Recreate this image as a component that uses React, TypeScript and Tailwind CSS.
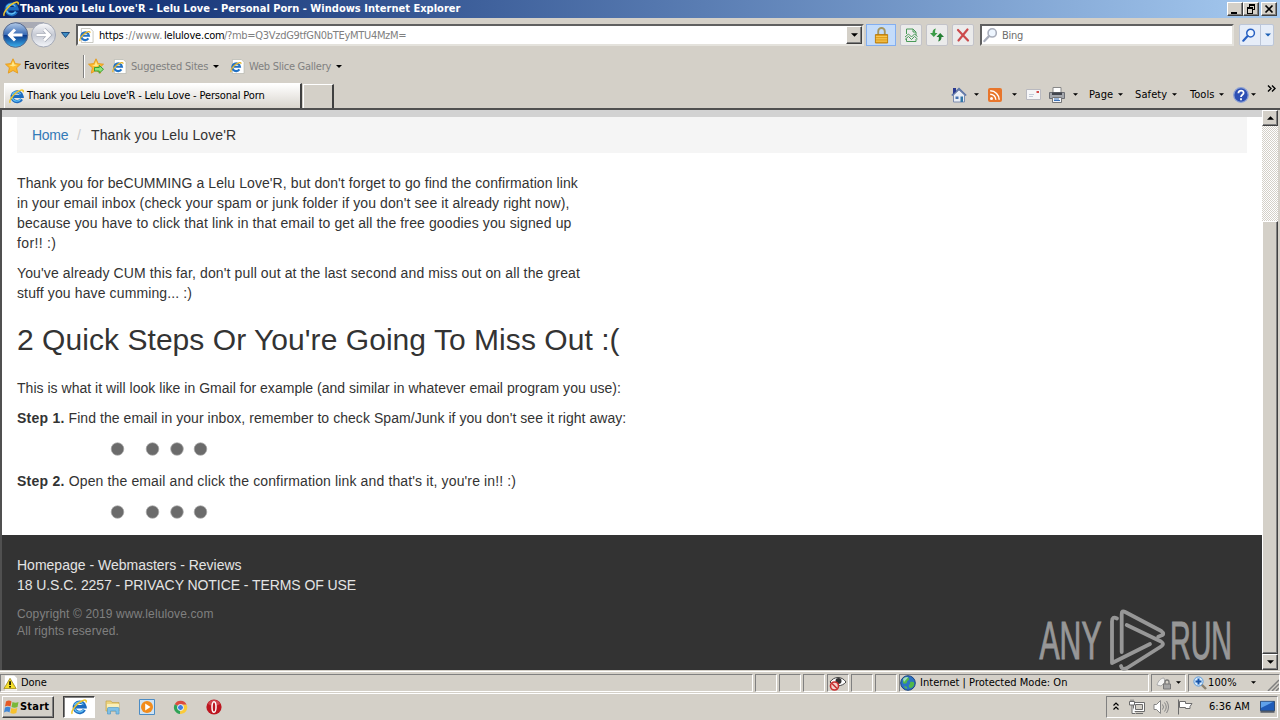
import React from 'react';

interface IconProps {
    className?: string;
}

const IeIcon: React.FC<IconProps> = ({ className }) => (
    <svg viewBox="0 0 16 16" className={className}>
        <path d="M13.4 10.8a5.4 5.2 0 1 1 .6-3H5" fill="none" stroke="#1d6cc0" strokeWidth="3.4" />
        <path d="M12.6 10.6a5 5 0 0 1-9-1M3.400 6.500a5 5 0 0 1 9-1" fill="none" stroke="#62c0f4" strokeWidth="1.300" />
        <path d="M1.200 14.800C-.6 11.800 7 2.600 13 1.200c2-.4 2.600.6 2 2.200" fill="none" stroke="#f0c62c" strokeWidth="1.500" />
    </svg>
);

const PageIcon: React.FC<IconProps> = ({ className }) => (
    <svg viewBox="0 0 16 16" className={className}>
        <path d="M2.500.5h9.500l3 3v12H2.500z" fill="#fff" stroke="#b8b8b0" strokeWidth=".8" />
        <path d="M10 11a4.100 4.100 0 1 1 .6-2.700H4.200" fill="none" stroke="#2272c4" strokeWidth="2.300" />
        <path d="M1 14C0 11.500 5 5 10 3.800c1.500-.3 1.900.4 1.500 1.400" fill="none" stroke="#e4b429" strokeWidth="1.300" />
    </svg>
);

const Caret: React.FC<IconProps> = ({ className = 'w-[6px] h-[3px] text-black' }) => (
    <svg viewBox="0 0 6 3" className={`shrink-0 ${className}`}>
        <path d="M0 0h6L3 3z" fill="currentColor" />
    </svg>
);

const Star: React.FC<{ arrow?: boolean }> = ({ arrow }) => (
    <svg viewBox="0 0 16 16" className="w-4 h-4 shrink-0">
        <path d="M8 .8l2.2 4.8 5.3.6-3.9 3.6 1.1 5.3L8 12.5l-4.7 2.6 1.1-5.3L.5 6.2l5.3-.6z" fill="#fdb92e" stroke="#e39a1c" strokeWidth=".9" />
        <path d="M8 3l1.3 3.4 3 .5-4.3 1.600-4-1.300 2.700-.5z" fill="#ffe98a" />
        {arrow && <path d="M6.500 9.500h4.700V7.400l4.300 3.900-4.300 3.900v-2.200H6.500z" fill="#8fe47a" stroke="#2c9a2e" strokeWidth=".9" />}
    </svg>
);

const Magnifier: React.FC<{ color: string; className: string }> = ({ color, className }) => (
    <svg viewBox="0 0 16 16" className={className}>
        <circle cx="9.800" cy="5.800" r="4.400" fill="#eef6ff" stroke={color} strokeWidth="1.700" />
        <path d="M6.400 9.200L1.500 14.500" stroke={color} strokeWidth="2.400" strokeLinecap="round" />
    </svg>
);

const raised = 'bg-[#d4d0c8] border border-t-white border-l-white border-r-[#404040] border-b-[#404040] shadow-[inset_-1px_-1px_0_#808080]';
const toolButton = 'h-[22px] flex items-center justify-center bg-[#ebebeb] border border-[#c3c3c9] rounded-[2px] shrink-0';

const TitleBar = () => (
    <div className="h-[18px] shrink-0 flex items-center pl-[3px] pr-[3px] bg-linear-to-r from-[#0a246a] to-[#a6caf0]">
        <IeIcon className="w-4 h-4 shrink-0" />
        <span className="ml-[1px] w-[460px] text-white font-bold text-[11px] leading-[18px] tracking-[0.02px] whitespace-nowrap">
            Thank you Lelu Love'R - Lelu Love - Personal Porn - Windows Internet Explorer
        </span>
        <div className="ml-auto flex">
            <div className={`w-4 h-[14px] ${raised}`}>
                <svg viewBox="0 0 14 12" className="w-[14px] h-3"><path d="M3 9h6v2H3z" /></svg>
            </div>
            <div className={`w-4 h-[14px] ${raised}`}>
                <svg viewBox="0 0 14 12" className="w-[14px] h-3" shapeRendering="crispEdges">
                    <path d="M5 1h6v2H5zM10 3h1v4H9V6h1zM5 3h1v1H5zM3 4h6v2H3zM3 6h1v4H3zM8 6h1v4H8zM3 10h6v1H3z" />
                </svg>
            </div>
            <div className={`ml-[2px] w-4 h-[14px] ${raised}`}>
                <svg viewBox="0 0 14 12" className="w-[14px] h-3"><path d="M3.500 2.500l7 7M10.500 2.500l-7 7" stroke="#000" strokeWidth="1.700" /></svg>
            </div>
        </div>
    </div>
);

const AddressRow = () => (
    <div className="h-[34px] shrink-0 flex items-center pl-[2px]">
        <svg viewBox="0 0 56 28" className="w-14 h-7 shrink-0">
            <defs>
                <linearGradient id="back" x1="0" y1="0" x2="0" y2="1">
                    <stop offset="0" stopColor="#b4cbe8" />
                    <stop offset=".48" stopColor="#3a6cb6" />
                    <stop offset=".52" stopColor="#0c3b8c" />
                    <stop offset="1" stopColor="#3cb2ee" />
                </linearGradient>
                <linearGradient id="forward" x1="0" y1="0" x2="0" y2="1">
                    <stop offset="0" stopColor="#fbfbfd" />
                    <stop offset=".5" stopColor="#c6cad4" />
                    <stop offset="1" stopColor="#f4f6fa" />
                </linearGradient>
            </defs>
            <path d="M13 1h29v6H13z" fill="#a9abb5" />
            <circle cx="13.500" cy="14" r="12.300" fill="url(#back)" stroke="#56688c" />
            <circle cx="41.500" cy="14" r="12" fill="url(#forward)" stroke="#a4a9b6" />
            <path d="M20.500 14H8M13 8.500L7.500 14l5.500 5.500" fill="none" stroke="#fff" strokeWidth="3" />
            <path d="M34.500 14H47M42 8.500l5.500 5.500-5.500 5.500" fill="none" stroke="#a3a8b4" strokeWidth="4" />
            <path d="M34.500 14H47M42 8.500l5.500 5.500-5.500 5.500" fill="none" stroke="#fff" strokeWidth="2.700" />
        </svg>
        <svg viewBox="0 0 9 6" className="ml-[3px] w-[9px] h-[6px] shrink-0">
            <path d="M.5.5h8L4.500 5.500z" fill="#3d8cc4" stroke="#1c4a7c" />
        </svg>
        <div className="ml-[6px] w-[788px] h-[22px] shrink-0 bg-white border-2 border-t-[#606060] border-l-[#606060] border-r-[#e4e2dc] border-b-[#e4e2dc] flex items-center">
            <PageIcon className="ml-[1px] w-[15px] h-[15px] shrink-0" />
            <span className="ml-[5px] pt-[2px] text-[11px] text-[#808080] whitespace-nowrap leading-[18px]">
                <span className="inline-block w-[26px] text-black tracking-[-0.2px]">https</span>
                <span className="inline-block w-[39px] tracking-[0.15px]">://www.</span>
                <span className="inline-block w-[60px] text-black tracking-[-0.2px]">lelulove.com</span>
                <span className="tracking-[-0.3px]">/?mb=Q3VzdG9tfGN0bTEyMTU4MzM=</span>
            </span>
            <div className={`ml-auto w-4 h-[18px] flex items-center justify-center ${raised}`}>
                <Caret className="w-[7px] h-[4px] text-black" />
            </div>
        </div>
        <div className="ml-[2px] w-[30px] h-[22px] shrink-0 flex items-center justify-center bg-[#c4dcfa] border border-[#82aef0]">
            <svg viewBox="0 0 16 18" className="w-[15px] h-[17px]">
                <path d="M4.500 9V4.500a3.500 3.500 0 0 1 7 0V9" fill="none" stroke="#a59660" strokeWidth="2" />
                <path d="M1.500 8h13v9h-13z" fill="#e3a01c" stroke="#b87c10" />
                <path d="M2 10h12M2 12.500h12M2 15h12" stroke="#f6cc60" />
            </svg>
        </div>
        <div className={`ml-1 w-[22px] ${toolButton}`}>
            <svg viewBox="0 0 16 16" className="w-4 h-4" fill="none" stroke="#4a9a58">
                <path d="M3.500 7V2h6.500l3 3v3M10 2v3h3M3.500 12v2.500h9.500V12" />
                <path d="M2 10l3.500-3 3 3 3-3 3 2.500M2 12.500l3.500-3 3 3 3-3 3 2.500" />
            </svg>
        </div>
        <div className={`ml-1 w-[22px] ${toolButton}`}>
            <svg viewBox="0 0 16 16" className="w-4 h-4">
                <path d="M7 1.500C4.500 2 3.500 3.500 3.500 6H1l3.800 4 3.700-4H6.200C6 4 6.200 2.700 7 1.500z" fill="#3c9c48" />
                <path d="M9 14.500c2.500-.5 3.500-2 3.500-4.500H15l-3.800-4-3.700 4h2.300c.2 2 0 3.300-.8 4.500z" fill="#257f34" />
            </svg>
        </div>
        <div className={`ml-1 w-[22px] ${toolButton}`}>
            <svg viewBox="0 0 16 16" className="w-4 h-4">
                <path d="M3 3l10 10.500M12.500 2.500L3.500 13.500" stroke="#cc4a4c" strokeWidth="2.200" strokeLinecap="round" />
            </svg>
        </div>
        <div className="ml-[6px] w-[254px] h-[22px] shrink-0 bg-white border-2 border-t-[#606060] border-l-[#606060] border-r-[#e4e2dc] border-b-[#e4e2dc] flex items-center">
            <Magnifier color="#a9aebb" className="ml-[1px] w-[15px] h-4" />
            <span className="ml-1 pt-[2px] text-[11px] text-[#6d6d6d] tracking-[-0.3px]">Bing</span>
        </div>
        <div className="ml-[5px] w-[35px] h-[22px] shrink-0 flex items-center bg-[#e6edf8] border border-[#bcc6d8] rounded-[2px]">
            <Magnifier color="#2861c2" className="ml-[2px] w-[14px] h-[14px]" />
            <div className="ml-1 w-px h-5 bg-[#bcc6d8]" />
            <Caret className="ml-[4px] w-[6px] h-[4px] text-[#1c60b4]" />
        </div>
    </div>
);

const FavoritesRow = () => (
    <div className="h-[28px] shrink-0 flex items-center pl-[5px] text-[11px] whitespace-nowrap">
        <Star />
        <span className="ml-[3px] pt-px w-[59px] tracking-[0.08px]">Favorites</span>
        <div className="w-[2px] h-[23px] bg-[#808080] border-r border-white" />
        <div className="ml-[3px]"><Star arrow /></div>
        <PageIcon className="ml-[8px] w-[15px] h-[15px] shrink-0" />
        <span className="ml-[4px] pt-[2px] w-[82px] text-[#808080] tracking-[-0.18px]">Suggested Sites</span>
        <Caret />
        <PageIcon className="ml-[11px] w-[15px] h-[15px] shrink-0" />
        <span className="ml-[4px] pt-[2px] w-[87px] text-[#808080] tracking-[-0.25px]">Web Slice Gallery</span>
        <Caret />
    </div>
);

const CommandBar = () => (
    <div className="ml-auto h-[27px] flex items-center text-[11px] whitespace-nowrap">
        <svg viewBox="0 0 16 16" className="w-4 h-4 shrink-0">
            <path d="M2.500 8v7h11V8L8 3z" fill="#e9eef6" stroke="#7d8cae" />
            <path d="M.8 8.500L8 1.500l7.200 7" fill="none" stroke="#5a74a8" strokeWidth="1.600" />
            <path d="M2 1h3v3.500L2 7z" fill="#2b3a90" />
            <path d="M4.500 9.500h3v2.500h-3z" fill="#4673b0" />
            <path d="M9.500 9.500H12V15H9.500z" fill="#3277a8" />
        </svg>
        <Caret className="ml-[7px] w-[5px] h-[3px]" />
        <svg viewBox="0 0 14 14" className="ml-[9px] w-[14px] h-[14px] shrink-0">
            <rect width="14" height="14" rx="2" fill="#e8762c" />
            <circle cx="3.500" cy="10.500" r="1.500" fill="#fff" />
            <path d="M2.200 6.200a5.600 5.600 0 0 1 5.600 5.600M2.200 2.800a9 9 0 0 1 9 9" fill="none" stroke="#fff" strokeWidth="1.500" />
        </svg>
        <Caret className="ml-[10px] w-[5px] h-[3px]" />
        <svg viewBox="0 0 15 11" className="ml-[9px] w-[15px] h-[11px] shrink-0">
            <path d="M.5.5h14v10H.5z" fill="#f6f6f8" stroke="#b9b9bf" />
            <path d="M10.500 2h2.500v2h-2.500z" fill="#d34a48" />
            <path d="M3 5.500h5M3 7.500h4" stroke="#c3cad7" />
        </svg>
        <svg viewBox="0 0 16 16" className="ml-[8px] w-4 h-4 shrink-0">
            <path d="M4 .5h8V6H4z" fill="#fff" stroke="#888" />
            <path d="M.5 5.500h15v6H.5z" fill="#a4a7ad" stroke="#6c6e74" />
            <path d="M3 5.500h10V8H3z" fill="#43464e" />
            <path d="M3.500 10.500h9v5h-9z" fill="#f2f5fa" stroke="#777" />
            <path d="M5 12h5M5 13.500h6" stroke="#3e73b8" />
        </svg>
        <Caret className="ml-[8px] w-[5px] h-[3px]" />
        <span className="ml-[11px] pt-px w-[29px] tracking-[0.05px]">Page</span>
        <Caret className="w-[5px] h-[3px]" />
        <span className="ml-[12px] pt-px w-[37px] tracking-[0.1px]">Safety</span>
        <Caret className="w-[5px] h-[3px]" />
        <span className="ml-[13px] pt-px w-[29px] tracking-[0.05px]">Tools</span>
        <Caret className="w-[5px] h-[3px]" />
        <svg viewBox="0 0 16 16" className="ml-[9px] w-4 h-4 shrink-0">
            <circle cx="8" cy="8" r="7.300" fill="#2d50b4" stroke="#8ea2d4" strokeWidth="1.300" />
            <path d="M5.400 6.200c0-3.600 5.400-3.400 5.200-.2C10.500 7.800 8 7.800 8 10M8 11.300v1.900" fill="none" stroke="#fff" strokeWidth="1.800" />
        </svg>
        <Caret className="ml-[2px] w-[5px] h-[3px]" />
        <svg viewBox="0 0 9 7" className="ml-[11px] mb-[13px] w-[9px] h-[7px] shrink-0">
            <path d="M1 .5l3 3-3 3M5 .5l3 3-3 3" fill="none" stroke="#000" strokeWidth="1.400" />
        </svg>
    </div>
);

const TabRow = () => (
    <div className="h-[28px] shrink-0 flex items-end pl-1 pr-1">
        <div className="w-[298px] h-[25px] shrink-0 flex items-center pl-[4px] border-t border-l border-white border-r-2 border-r-[#404040] bg-linear-to-b from-white to-[#d9d5ce] text-[11px] whitespace-nowrap">
            <IeIcon className="w-[15px] h-[15px] shrink-0" />
            <span className="ml-[3px] pt-px tracking-[-0.15px]">Thank you Lelu Love'R - Lelu Love - Personal Porn</span>
        </div>
        <div className="ml-[1px] w-[31px] h-[24px] shrink-0 border-t border-l border-white border-r-2 border-r-[#404040]" />
        <CommandBar />
    </div>
);

const Dots = () => (
    <svg viewBox="0 0 110 20" className="ml-[93px] w-[110px] h-5" fill="#6b6b6b" stroke="#a9a9a9" strokeWidth=".7">
        <circle cx="7.500" cy="10" r="6.300" />
        <circle cx="42.500" cy="10" r="6.300" />
        <circle cx="67" cy="10" r="6.300" />
        <circle cx="90.500" cy="10" r="6.300" />
    </svg>
);

const AnyRunLogo = () => (
    <svg viewBox="0 0 210 62" className="absolute left-[1034px] top-[499px] w-[210px] h-[62px] overflow-visible" fill="#979797">
        <g fontSize="54" stroke="#979797" strokeWidth="1.100" fontFamily="'Liberation Sans Narrow', 'Liberation Sans', sans-serif">
            <text x="3.500" y="50" textLength="62" lengthAdjust="spacingAndGlyphs">ANY</text>
            <text x="134" y="50" textLength="62" lengthAdjust="spacingAndGlyphs">RUN</text>
        </g>
        <g transform="translate(-2 0)" fill="none" stroke="#979797" strokeWidth="3.800" strokeLinejoin="round" strokeLinecap="round">
            <path d="M83 9.500q-5-2.500-5 3v41.500l38-19" />
            <path d="M87.700 43V5q0-4 3.500-2l36 19q4 3 0 4.500l-3 1.200" />
            <path d="M92.700 16L127 32.500q4 2.500 0 5L93 59q-5 2.500-6-2" />
        </g>
    </svg>
);

const PageContent = () => (
    <div className="relative w-[1260px] h-[560px] shrink-0 flex flex-col bg-white text-[#333] font-['Liberation_Sans',Arial,sans-serif] text-[14px] leading-5">
        <div className="h-[7px] shrink-0 bg-[#d2d2d2]" />
        <nav className="ml-[15px] mr-[15px] h-[36px] shrink-0 bg-[#f5f5f5] flex items-center pl-[15px] whitespace-nowrap">
            <span className="w-[45px] text-[#337ab7] tracking-[-0.3px]">Home</span>
            <span className="w-[14px] text-[#ccc]">/</span>
            <span className="tracking-[0.12px]">Thank you Lelu Love'R</span>
        </nav>
        <div className="pl-[15px] pt-5 h-[382px] shrink-0 whitespace-nowrap">
            <p className="tracking-[0.1px]">
                <span className="tracking-[0.088px]">Thank you for beCUMMING a Lelu Love'R, but don't forget to go find the confirmation link</span><br />
                in your email inbox (check your spam or junk folder if you don't see it already right now),<br />
                <span className="tracking-[0.115px]">because you have to click that link in that email to get all the free goodies you signed up</span><br />
                <span className="tracking-[0.35px]">for!! :)</span>
            </p>
            <p className="mt-[10px] tracking-[0.12px]">
                You've already CUM this far, don't pull out at the last second and miss out on all the great<br />
                stuff you have cumming... :)
            </p>
            <h2 className="mt-5 text-[30px] leading-[33px] tracking-[0.05px]">2 Quick Steps Or You're Going To Miss Out :(</h2>
            <p className="mt-[22px] tracking-[0.025px]">This is what it will look like in Gmail for example (and similar in whatever email program you use):</p>
            <p className="mt-[10px] tracking-[0.055px]"><b className="tracking-[0.25px]">Step 1.</b> Find the email in your inbox, remember to check Spam/Junk if you don't see it right away:</p>
            <div className="mt-[11px]"><Dots /></div>
            <p className="mt-[12px] tracking-[0.135px]"><b className="tracking-[0.25px]">Step 2.</b> Open the email and click the confirmation link and that's it, you're in!! :)</p>
            <div className="mt-[11px]"><Dots /></div>
        </div>
        <footer className="grow bg-[#333] pl-[15px] pt-5 text-[#e4e4e4] whitespace-nowrap">
            <p>Homepage - Webmasters - Reviews</p>
            <p className="tracking-[-0.07px]">18 U.S.C. 2257 - PRIVACY NOTICE - TERMS OF USE</p>
            <p className="mt-[11px] text-[12px] leading-[17px] tracking-[0.13px] text-[#808080]">
                Copyright © 2019 www.lelulove.com<br />
                All rights reserved.
            </p>
        </footer>
        <AnyRunLogo />
    </div>
);

const ScrollBar = () => (
    <div className="w-4 h-[560px] shrink-0 flex flex-col bg-[repeating-conic-gradient(#ffffff_0_25%,#d4d0c8_0_50%)] bg-[length:2px_2px]">
        <div className={`h-4 flex items-center justify-center ${raised}`}>
            <Caret className="w-[7px] h-[4px] rotate-180 text-black" />
        </div>
        <div className={`mt-[95px] h-[433px] ${raised}`} />
        <div className={`h-4 flex items-center justify-center ${raised}`}>
            <Caret className="w-[7px] h-[4px] text-black" />
        </div>
    </div>
);

const panel = 'h-[18px] shrink-0 flex items-center border border-t-[#808080] border-l-[#808080] border-r-white border-b-white';

const StatusBar = () => (
    <div className="h-[22px] shrink-0 flex items-center gap-[2px] border-t border-white text-[11px] whitespace-nowrap">
        <div className={`w-[753px] pl-[2px] ${panel}`}>
            <svg viewBox="0 0 16 16" className="w-[15px] h-4 shrink-0">
                <path d="M2 0h10l3 3v13H2z" fill="#fff" />
                <path d="M7.500 3L14 14H1z" fill="#f5df28" stroke="#a8922a" strokeLinejoin="round" />
                <path d="M7.500 6v4M7.500 11.300v1.500" stroke="#000" strokeWidth="1.700" />
            </svg>
            <span className="ml-[3px] pt-[2px] tracking-[-0.1px]">Done</span>
        </div>
        <div className={`w-[22px] ${panel}`} />
        <div className={`w-[22px] ${panel}`} />
        <div className={`w-[22px] ${panel}`} />
        <div className={`w-[22px] justify-center ${panel}`}>
            <svg viewBox="0 0 18 16" className="w-[18px] h-4 shrink-0">
                <path d="M1 7C5 1 13 1 17 7c-4 5-12 5-16 0z" fill="#fff" stroke="#444" />
                <circle cx="9.500" cy="6" r="3" fill="#333" />
                <circle cx="5.500" cy="11" r="4" fill="#f4d0cc" stroke="#c92f2f" strokeWidth="1.600" />
                <path d="M3 8.500l5 5" stroke="#c92f2f" strokeWidth="1.600" />
            </svg>
        </div>
        <div className={`w-[22px] ${panel}`} />
        <div className={`w-[22px] ${panel}`} />
        <div className={`w-[250px] ${panel}`}>
            <svg viewBox="0 0 16 16" className="w-4 h-4 shrink-0">
                <circle cx="8" cy="8" r="7.300" fill="#2b72c4" stroke="#1a4480" />
                <path d="M3 4c3-3 6-2 6 0s-2 1-2 3-3 2-4 1zM10 7c3-1 5 0 4 3s-4 4-5 2 2-3 1-5zM4 11l3 1 0 2-2-1z" fill="#52b848" />
                <path d="M3 4c1.500-1.700 4-2.400 5-1.500L4 7z" fill="#bfe6f8" opacity=".7" />
            </svg>
            <span className="ml-[4px] pt-[2px] tracking-[0.02px]">Internet | Protected Mode: On</span>
        </div>
        <div className={`w-[35px] pl-[4px] ${panel}`}>
            <svg viewBox="0 0 16 16" className="w-4 h-4 shrink-0">
                <path d="M1 10c1-4 4-7 7-7l1 4-4 4z" fill="#f4f4f4" stroke="#aaa" />
                <path d="M9 9V7a2 2 0 0 1 4 0v2" fill="none" stroke="#777" strokeWidth="1.300" />
                <path d="M7.500 9h7v5h-7z" fill="#a5a5a5" stroke="#777" />
            </svg>
            <Caret className="ml-[4px] w-[5px] h-[3px]" />
        </div>
        <div className={`w-[92px] pl-[4px] ${panel} border-r-transparent`}>
            <svg viewBox="0 0 14 14" className="w-[14px] h-[14px] shrink-0">
                <path d="M8.500 8.500L13 13" stroke="#8b8170" strokeWidth="2.400" />
                <circle cx="5.500" cy="5.500" r="4.600" fill="#d6eafc" stroke="#5b9bdd" />
                <path d="M5.500 2.500v6M2.500 5.500h6" stroke="#1754a8" strokeWidth="2" />
            </svg>
            <span className="ml-[1px] pt-[2px] w-[43px] tracking-[0.1px]">100%</span>
            <Caret className="w-[5px] h-[3px]" />
            <svg viewBox="0 0 12 12" className="ml-auto w-3 h-3 shrink-0 self-end">
                <path d="M1 12L12 1M5 12l7-7M9 12l3-3" stroke="#808080" strokeWidth="1.500" />
            </svg>
        </div>
    </div>
);

const TaskBar = () => (
    <div className="h-[27px] shrink-0 flex items-start pt-[2px] pl-[2px] pr-[2px] border-t border-white text-[11px] whitespace-nowrap">
        <div className={`w-[52px] h-[22px] shrink-0 flex items-center pl-[1px] ${raised}`}>
            <svg viewBox="0 0 16 16" className="w-4 h-4 shrink-0">
                <path d="M2 2.500q3-2 5.500 0L6.500 7.500q-3-1.500-5.500 0z" fill="#e65a24" />
                <path d="M8.500 3q3 1.500 6 0l-1 5q-3 1.500-6 0z" fill="#79b83a" />
                <path d="M1 8.500q3-1.500 5.500 0l-1 5q-2.500-2-5.500 0z" fill="#3f86d6" />
                <path d="M7.300 9q3 1.500 6 0l-1 5q-3 1.500-6 0z" fill="#f7c12d" />
            </svg>
            <span className="pt-px font-bold tracking-[0.2px]">Start</span>
        </div>
        <div className="ml-[9px] w-[32px] h-[22px] shrink-0 flex items-center justify-center bg-white border border-t-[#404040] border-l-[#404040] border-r-white border-b-white shadow-[inset_1px_1px_0_#808080]">
            <IeIcon className="w-4 h-4" />
        </div>
        <div className="h-[22px] flex items-center gap-[18px] ml-[10px]">
            <svg viewBox="0 0 16 16" className="w-4 h-4">
                <path d="M1 2h5l1 1.500h7V12H1z" fill="#ecd37e" stroke="#c3a349" strokeWidth=".7" />
                <path d="M2 5h12v4H2z" fill="#f9efb9" />
                <path d="M2.500 15V9.500q0-1 1-1h9.500q1 0 1 1V15h-3v-3H5.500v3z" fill="#7fc0e6" stroke="#559cc8" strokeWidth=".7" />
            </svg>
            <svg viewBox="0 0 16 16" className="w-4 h-4">
                <path d="M.5.5h15v15H.5z" fill="#cfe3f4" stroke="#4c8cc4" />
                <circle cx="8" cy="8" r="6" fill="#f28c1c" />
                <path d="M6.200 4.500v7L11.500 8z" fill="#fff" />
            </svg>
            <svg viewBox="0 0 16 16" className="w-[15px] h-[15px]">
                <path d="M8 8L1.900 4.500A7 7 0 0 1 14.500 5H8z" fill="#dd4b3e" />
                <path d="M8 8L7.500 15A7 7 0 0 1 1.900 4.500z" fill="#2fa356" />
                <path d="M8 8V5h6.500A7 7 0 0 1 7.500 15z" fill="#fbcb38" />
                <circle cx="8" cy="8" r="3.200" fill="#3f7ee0" stroke="#fff" />
            </svg>
            <svg viewBox="0 0 16 16" className="w-4 h-4">
                <circle cx="8" cy="8" r="7.600" fill="#bd1620" />
                <path d="M2 5a6.500 6.500 0 0 1 12 0q-6 4-12 0z" fill="#e0646a" opacity=".6" />
                <ellipse cx="8" cy="8" rx="2" ry="5.300" fill="#bd1620" stroke="#fff" strokeWidth="1.500" />
            </svg>
        </div>
        <div className="ml-auto w-[172px] h-[22px] shrink-0 flex items-center border border-t-[#808080] border-l-[#808080] border-r-white border-b-white">
            <svg viewBox="0 0 6 8" className="ml-[6px] w-[6px] h-2 shrink-0 mb-[3px]">
                <path d="M.5 3.500L3 1l2.500 2.500M.5 7.500L3 5l2.500 2.500" fill="none" stroke="#000" strokeWidth="1.200" />
            </svg>
            <svg viewBox="0 0 16 16" className="ml-[10px] w-4 h-4 shrink-0" fill="#fff" stroke="#6c6c6c">
                <path d="M4.500 3.500h11v9h-11z" />
                <path d="M6.500 5.500h7v5h-7z" fill="#d4d0c8" />
                <path d="M.5 2.500h5v3.500h-5zM2 2.500V.5M4 2.500V.5M3 6v8.500h3.500M7 14.500h7" />
            </svg>
            <svg viewBox="0 0 16 16" className="ml-[8px] w-4 h-4 shrink-0" fill="none" stroke="#858585">
                <path d="M1 5.500h2.500l4-4v13l-4-4H1z" fill="#fff" />
                <path d="M9.500 5.500q2 2.500 0 5M11.500 3.500q3.500 4.500 0 9M13.500 2q4 6 0 12" />
            </svg>
            <svg viewBox="0 0 16 16" className="ml-[8px] w-4 h-4 shrink-0" fill="#fff" stroke="#6c6c6c">
                <path d="M2.500 2.500h6v2h6.500l-2 3 0 2H8.500V8.500h-6z" />
                <path d="M1.500.5v15" />
            </svg>
            <span className="ml-[16px] pt-px w-[43px] tracking-[0.02px]">6:36 AM</span>
            <svg viewBox="0 0 16 14" className="ml-[8px] w-[15px] h-[14px] shrink-0">
                <path d="M.5 1h15v10H.5z" fill="#1f5cb8" stroke="#27456f" />
                <path d="M1 1.500h13L1 8z" fill="#5fa2ea" />
                <path d="M.5 11.500h15V13H.5z" fill="#3c4654" />
            </svg>
        </div>
    </div>
);

const App = () => {
    return (
        <div className="w-[1280px] h-[720px] overflow-hidden flex flex-col bg-[#d4d0c8] text-black font-['DejaVu_Sans_Condensed','DejaVu_Sans',sans-serif]">
            <TitleBar />
            <AddressRow />
            <FavoritesRow />
            <TabRow />
            <div className="h-[562px] shrink-0 flex border-t-2 border-t-[#505050] border-l-2 border-l-[#505050]">
                <PageContent />
                <ScrollBar />
            </div>
            <div className="h-px shrink-0" />
            <StatusBar />
            <TaskBar />
        </div>
    );
};

export default App;
